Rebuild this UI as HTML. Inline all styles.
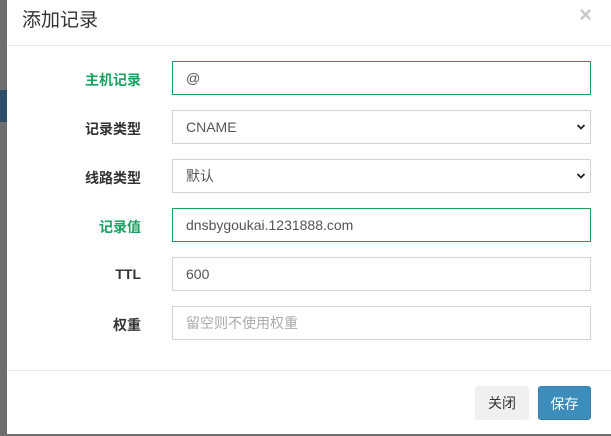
<html><head><style>
body{margin:0;width:611px;height:436px;background:#6e6e6e;position:relative;overflow:hidden;font-family:"Liberation Sans","Noto Sans CJK SC",sans-serif}
.m{position:absolute;left:7px;top:0;width:604px;height:434px;background:#fff}
.t{position:absolute;left:15px;top:5px;font-size:19px;color:#333}
.x{position:absolute;right:19px;top:2px;font-size:22px;color:#c8c8c8;font-weight:bold}
.hl{position:absolute;left:0;right:0;top:45px;border-top:1px solid #e5e5e5}
.fl{position:absolute;left:0;right:0;top:370px;border-top:1px solid #e5e5e5}
.l{position:absolute;right:470px;font-size:14px;font-weight:bold;color:#333;width:100px;text-align:right}
.g{color:#1aa260}
.i{position:absolute;left:165px;font-size:14px;color:#555;line-height:32px;padding-left:13px;box-sizing:border-box;width:419px;height:34px;border:1px solid #d2d2dc}
.i.a{border-color:#1aa260}
.ph{color:#aaa}
.ar{position:absolute;right:4px;top:12px}
.b{position:absolute;top:386px;height:34px;line-height:34px;font-size:14px;text-align:center;border-radius:3px}
</style></head><body>
<div style="position:absolute;left:0;top:90px;width:7px;height:32px;background:#2d4e6a"></div>
<div class="m">
<div class="t">添加记录</div><div class="x">×</div>
<div class="hl"></div>
<div class="l g" style="top:70px">主机记录</div><div class="i a" style="top:61px">@</div>
<div class="l" style="top:119px">记录类型</div><div class="i" style="top:110px">CNAME<svg class="ar" width="10" height="8" viewBox="0 0 10 8"><path d="M1.5 2 L5 5.5 L8.5 2" fill="none" stroke="#222" stroke-width="1.8"/></svg></div>
<div class="l" style="top:168px">线路类型</div><div class="i" style="top:159px">默认<svg class="ar" width="10" height="8" viewBox="0 0 10 8"><path d="M1.5 2 L5 5.5 L8.5 2" fill="none" stroke="#222" stroke-width="1.8"/></svg></div>
<div class="l g" style="top:217px">记录值</div><div class="i a" style="top:208px">dnsbygoukai.1231888.com</div>
<div class="l" style="top:266px">TTL</div><div class="i" style="top:257px">600</div>
<div class="l" style="top:315px">权重</div><div class="i" style="top:306px"><span class="ph">留空则不使用权重</span></div>
<div class="fl"></div>
<div class="b" style="left:468px;width:54px;background:#f0f0f0;color:#333">关闭</div>
<div class="b" style="left:531px;width:53px;background:#3c8dbc;color:#fff;border:1px solid #367fa9;box-sizing:border-box">保存</div>
</div>
</body></html>
